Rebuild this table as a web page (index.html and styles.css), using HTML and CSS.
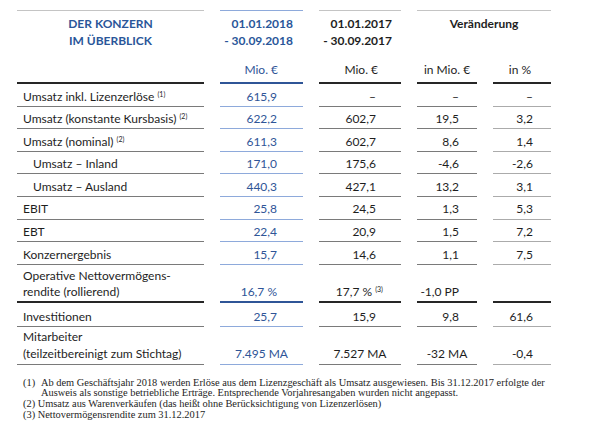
FILE: index.html
```html
<!DOCTYPE html>
<html lang="de">
<head>
<meta charset="utf-8">
<title>Der Konzern im Überblick</title>
<link rel="stylesheet" href="styles.css">
</head>
<body>
<table class="kpi">
  <colgroup>
    <col class="c1"><col class="c2"><col class="c3"><col class="c4"><col class="c5">
  </colgroup>
  <thead>
    <tr class="h1">
      <th class="title">DER KONZERN<br>IM ÜBERBLICK</th>
      <th class="cur date">01.01.2018<br>- 30.09.2018</th>
      <th class="prev date">01.01.2017<br>- 30.09.2017</th>
      <th class="chg" colspan="2">Veränderung</th>
    </tr>
    <tr class="h2">
      <th class="blank"></th>
      <th class="cur unit">Mio. €</th>
      <th class="prev unit">Mio. €</th>
      <th class="abs unit">in Mio. €</th>
      <th class="pct unit">in %</th>
    </tr>
  </thead>
  <tbody>
    <tr>
      <td class="lab">Umsatz inkl. Lizenzerlöse <sup>(1)</sup></td>
      <td class="cur num">615,9</td>
      <td class="prev num">–</td>
      <td class="abs num">–</td>
      <td class="pct num">–</td>
    </tr>
    <tr>
      <td class="lab">Umsatz (konstante Kursbasis) <sup>(2)</sup></td>
      <td class="cur num">622,2</td>
      <td class="prev num">602,7</td>
      <td class="abs num">19,5</td>
      <td class="pct num">3,2</td>
    </tr>
    <tr>
      <td class="lab">Umsatz (nominal) <sup>(2)</sup></td>
      <td class="cur num">611,3</td>
      <td class="prev num">602,7</td>
      <td class="abs num">8,6</td>
      <td class="pct num">1,4</td>
    </tr>
    <tr>
      <td class="lab sub">Umsatz – Inland</td>
      <td class="cur num">171,0</td>
      <td class="prev num">175,6</td>
      <td class="abs num">-4,6</td>
      <td class="pct num">-2,6</td>
    </tr>
    <tr>
      <td class="lab sub">Umsatz – Ausland</td>
      <td class="cur num">440,3</td>
      <td class="prev num">427,1</td>
      <td class="abs num">13,2</td>
      <td class="pct num">3,1</td>
    </tr>
    <tr>
      <td class="lab">EBIT</td>
      <td class="cur num">25,8</td>
      <td class="prev num">24,5</td>
      <td class="abs num">1,3</td>
      <td class="pct num">5,3</td>
    </tr>
    <tr>
      <td class="lab">EBT</td>
      <td class="cur num">22,4</td>
      <td class="prev num">20,9</td>
      <td class="abs num">1,5</td>
      <td class="pct num">7,2</td>
    </tr>
    <tr>
      <td class="lab">Konzernergebnis</td>
      <td class="cur num">15,7</td>
      <td class="prev num">14,6</td>
      <td class="abs num">1,1</td>
      <td class="pct num">7,5</td>
    </tr>
    <tr class="two thick">
      <td class="lab">Operative Nettovermögens-<br>rendite (rollierend)</td>
      <td class="cur num">16,7 %</td>
      <td class="prev num fnval">17,7 % <sup>(3)</sup></td>
      <td class="abs num">-1,0 PP</td>
      <td class="pct num"></td>
    </tr>
    <tr class="inv">
      <td class="lab">Investitionen</td>
      <td class="cur num">25,7</td>
      <td class="prev num">15,9</td>
      <td class="abs num">9,8</td>
      <td class="pct num">61,6</td>
    </tr>
    <tr class="two staff">
      <td class="lab">Mitarbeiter<br>(teilzeitbereinigt zum Stichtag)</td>
      <td class="cur ctr">7.495 MA</td>
      <td class="prev ctr">7.527 MA</td>
      <td class="abs ctr">-32 MA</td>
      <td class="pct num">-0,4</td>
    </tr>
  </tbody>
</table>

<div class="notes">
  <p class="note hang"><span class="mark">(1)</span><span>Ab dem Geschäftsjahr 2018 werden Erlöse aus dem Lizenzgeschäft als Umsatz ausgewiesen. Bis 31.12.2017 erfolgte der Ausweis als sonstige betriebliche Erträge. Entsprechende Vorjahresangaben wurden nicht angepasst.</span></p>
  <p class="note">(2) Umsatz aus Warenverkäufen (das heißt ohne Berücksichtigung von Lizenzerlösen)</p>
  <p class="note">(3) Nettovermögensrendite zum 31.12.2017</p>
</div>
</body>
</html>
```

FILE: styles.css
```css
html, body {
  margin: 0;
  padding: 0;
  background: #ffffff;
}

body {
  width: 600px;
  height: 438px;
  overflow: hidden;
  font-family: Lato, "Liberation Sans", sans-serif;
  color: #1e1e1e;
}

.kpi {
  margin: 10px 0 0 1px;
  border-collapse: separate;
  border-spacing: 16px 0;
  table-layout: fixed;
  width: 566px;
  font-size: 12px;
}

.c1 { width: 187px; }
.c2 { width: 83px; }
.c3 { width: 82px; }
.c4 { width: 60px; }
.c5 { width: 58px; }

.kpi th,
.kpi td {
  padding: 0;
  line-height: 17px;
  white-space: nowrap;
}

/* header */
.h1 th {
  border-top: 1px solid #c4c4c4;
  padding-top: 3.5px;
  vertical-align: top;
  font-weight: 700;
}
.h1 th.cur { border-top-color: #8eaadb; }

.h1 th.title {
  text-align: center;
  color: #2a5699;
}
.date {
  text-align: right;
}
.cur.date {
  color: #2a5699;
  padding-right: 10px;
}
.prev.date {
  padding-right: 9px;
}
.chg {
  text-align: center;
}

.h2 th {
  font-weight: 400;
  padding-top: 12px;
  padding-bottom: 4.5px;
  border-bottom: 2px solid #262626;
}
.h2 th.cur {
  border-bottom-color: #2f5597;
  color: #2f5597;
}
.unit.cur { text-align: right; padding-right: 25px; }
.unit.prev { text-align: right; padding-right: 23px; }
.unit.abs, .unit.pct { text-align: center; }
.unit.pct { padding-right: 4px; }

/* body rows */
.kpi td {
  padding-top: 3.5px;
  padding-bottom: 1.1px;
  border-bottom: 1px solid #7a7a7a;
  vertical-align: bottom;
}
.kpi td.cur {
  color: #2f5597;
  border-bottom-color: #8eaadb;
}
.kpi td.pct {
  border-bottom-color: #ababab;
}

.lab {
  text-align: left;
  padding-left: 6px;
}
.kpi td.lab { padding-left: 6px; }
.kpi td.lab.sub { padding-left: 16px; }

.num { text-align: right; }
.num.cur { padding-right: 26px; }
.num.prev { padding-right: 25px; }
.num.abs { padding-right: 18px; }
.num.pct { padding-right: 18px; }
.num.fnval { padding-right: 18px; }
.ctr { text-align: center; }

sup {
  font-size: 7px;
  line-height: 0;
  vertical-align: 4px;
}

.two td {
  line-height: 16px;
  padding-top: 3px;
  padding-bottom: 1px;
}
.thick td {
  border-bottom: 2px solid #262626;
}
.kpi .thick td.cur { border-bottom-color: #2f5597; }
.kpi .thick td.pct { border-bottom-color: #262626; }

.inv td {
  padding-top: 5px;
  padding-bottom: 1px;
}

.staff td {
  line-height: 17px;
  padding-top: 1.5px;
  padding-bottom: 2px;
}

/* footnotes */
.notes {
  margin: 13px 0 0 23px;
  width: 530px;
  font-family: "Liberation Serif", "Times New Roman", serif;
  font-size: 10.4px;
  line-height: 10px;
  color: #1e1e1e;
}
.note {
  margin: 0 0 1px;
}
.hang {
  display: flex;
}
.mark {
  flex: 0 0 18px;
}
```
